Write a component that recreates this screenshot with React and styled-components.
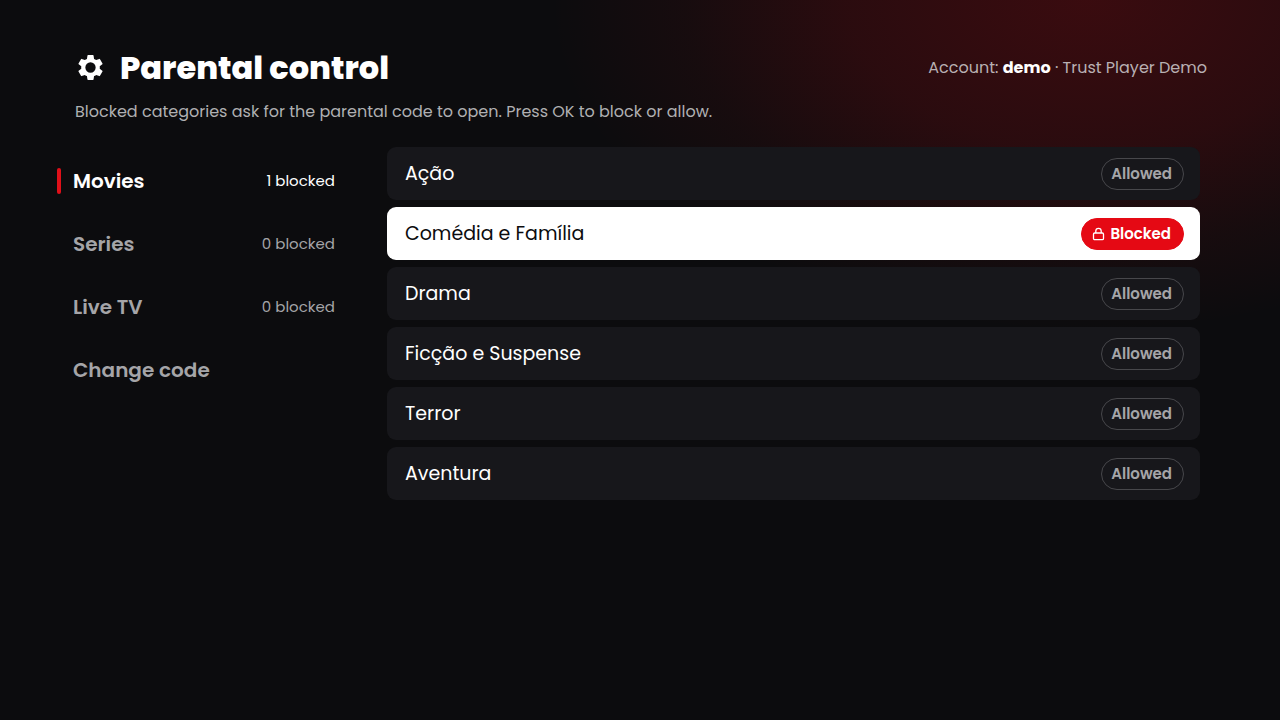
import React, { useState } from "react";
import styled, { createGlobalStyle } from "styled-components";

const GlobalStyle = createGlobalStyle`
  *, *::before, *::after { box-sizing: border-box; }
  body {
    margin: 0;
    background: #0c0c0e;
    color: #fff;
    font-family: Poppins, Inter, "Liberation Sans", sans-serif;
  }
  button { font: inherit; cursor: pointer; }
`;

const Page = styled.div`
  min-height: 100vh;
  padding: 48px 73px 48px 57px;
  background: radial-gradient(
      ellipse 42% 46% at 85% 0%,
      rgba(229, 9, 20, 0.21) 0%,
      rgba(229, 9, 20, 0.14) 45%,
      rgba(229, 9, 20, 0.05) 75%,
      transparent 100%
    ),
    #0c0c0e;
`;

const Header = styled.header`
  display: flex;
  align-items: center;
  justify-content: space-between;
  padding-left: 18px;
`;

const Heading = styled.div`
  display: flex;
  align-items: center;
  gap: 14px;
`;

const Title = styled.h1`
  margin: 0;
  font-size: 32px;
  line-height: 39px;
  font-weight: 800;
`;

const Account = styled.p`
  margin: 0;
  font-size: 16px;
  line-height: 24px;
  color: #b9b0b3;

  strong {
    color: #fff;
    font-weight: 700;
  }
`;

const Subtitle = styled.p`
  margin: 13px 0 0;
  padding-left: 18px;
  font-size: 16px;
  line-height: 24px;
  color: #b0b0b2;
`;

const Columns = styled.div`
  display: flex;
  align-items: flex-start;
  gap: 36px;
  margin-top: 23px;
`;

const Tabs = styled.nav`
  display: flex;
  flex: 0 0 294px;
  flex-direction: column;
  padding-top: 2px;
`;

const Tab = styled.button`
  display: flex;
  align-items: center;
  height: 63px;
  padding: 0 16px 0 0;
  border: 0;
  background: none;
  color: ${(p) => (p.$active ? "#fff" : "#a5a5a8")};
  text-align: left;

  &::before {
    content: "";
    width: 4px;
    height: 26px;
    margin-right: 12px;
    border-radius: 2px;
    background: ${(p) => (p.$active ? "#e01019" : "transparent")};
  }
`;

const TabName = styled.span`
  flex: 1;
  font-size: 20px;
  line-height: 30px;
  font-weight: 600;
`;

const TabCount = styled.span`
  font-size: 15px;
  line-height: 24px;
`;

const List = styled.ul`
  display: flex;
  flex: 1;
  flex-direction: column;
  gap: 7px;
  margin: 0;
  padding: 0 7px 0 0;
  list-style: none;
`;

const Row = styled.button`
  display: flex;
  align-items: center;
  justify-content: space-between;
  width: 100%;
  height: 53px;
  padding: 0 16px 0 18px;
  border: 0;
  border-radius: 9px;
  background: ${(p) => (p.$focused ? "#fff" : "#17171b")};
  color: ${(p) => (p.$focused ? "#0c0c0e" : "#fff")};
  font-size: 19px;
  line-height: 28px;
`;

const Pill = styled.span`
  display: flex;
  align-items: center;
  gap: 5px;
  height: 32px;
  padding: 0 ${(p) => (p.$blocked ? "12px 0 10px" : "11px 0 9px")};
  border: 1px solid ${(p) => (p.$blocked ? "#e50914" : "#47474b")};
  border-radius: 16px;
  background: ${(p) => (p.$blocked ? "#e50914" : "transparent")};
  color: ${(p) => (p.$blocked ? "#fff" : "#a5a5a8")};
  font-size: 15px;
  line-height: 20px;
  font-weight: 600;
`;

const GearIcon = () => (
  <svg width="31" height="31" viewBox="0 0 24 24" fill="currentColor" aria-hidden="true">
    <path d="M19.14 12.94c.04-.3.06-.61.06-.94 0-.32-.02-.64-.07-.94l2.03-1.58a.49.49 0 0 0 .12-.61l-1.92-3.32a.49.49 0 0 0-.59-.22l-2.39.96c-.5-.38-1.03-.7-1.62-.94L14.4 2.81a.48.48 0 0 0-.48-.41h-3.84c-.24 0-.43.17-.47.41L9.25 5.35c-.59.24-1.13.57-1.62.94l-2.39-.96a.48.48 0 0 0-.59.22L2.74 8.87c-.12.21-.08.47.12.61l2.03 1.58c-.05.3-.09.63-.09.94s.02.64.07.94l-2.03 1.58a.49.49 0 0 0-.12.61l1.92 3.32c.12.22.37.29.59.22l2.39-.96c.5.38 1.03.7 1.62.94l.36 2.54c.05.24.24.41.48.41h3.84c.24 0 .44-.17.47-.41l.36-2.54c.59-.24 1.13-.56 1.62-.94l2.39.96c.22.08.47 0 .59-.22l1.92-3.32a.48.48 0 0 0-.12-.61zM12 16a4 4 0 1 1 0-8 4 4 0 0 1 0 8z" />
  </svg>
);

const LockIcon = () => (
  <svg width="13" height="14" viewBox="0 0 13 14" fill="none" stroke="currentColor" strokeWidth="1.3" aria-hidden="true">
    <rect x="1.5" y="6" width="10" height="6.7" rx="1.2" />
    <path d="M3.8 6V4.1a2.7 2.7 0 0 1 5.4 0V6" />
  </svg>
);

const tabs = [
  { name: "Movies", count: "1 blocked" },
  { name: "Series", count: "0 blocked" },
  { name: "Live TV", count: "0 blocked" },
  { name: "Change code" },
];

const categories = ["Ação", "Comédia e Família", "Drama", "Ficção e Suspense", "Terror", "Aventura"];

export default function App() {
  const [active, setActive] = useState("Movies");
  const [focused, setFocused] = useState("Comédia e Família");
  const blocked = "Comédia e Família";

  return (
    <Page>
      <GlobalStyle />
      <Header>
        <Heading>
          <GearIcon />
          <Title>Parental control</Title>
        </Heading>
        <Account>
          Account: <strong>demo</strong> · Trust Player Demo
        </Account>
      </Header>
      <Subtitle>Blocked categories ask for the parental code to open. Press OK to block or allow.</Subtitle>
      <Columns>
        <Tabs>
          {tabs.map((tab) => (
            <Tab key={tab.name} type="button" $active={tab.name === active} onClick={() => setActive(tab.name)}>
              <TabName>{tab.name}</TabName>
              {tab.count && <TabCount>{tab.count}</TabCount>}
            </Tab>
          ))}
        </Tabs>
        <List>
          {categories.map((name) => (
            <li key={name}>
              <Row type="button" $focused={name === focused} onClick={() => setFocused(name)}>
                <span>{name}</span>
                <Pill $blocked={name === blocked}>
                  {name === blocked && <LockIcon />}
                  {name === blocked ? "Blocked" : "Allowed"}
                </Pill>
              </Row>
            </li>
          ))}
        </List>
      </Columns>
    </Page>
  );
}
